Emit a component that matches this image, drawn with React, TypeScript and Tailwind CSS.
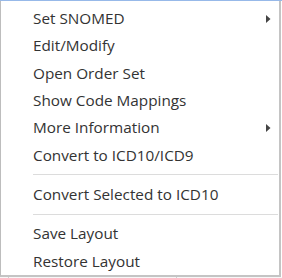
import React from 'react'

const Arrow = () => (
    <svg width="5" height="8" viewBox="0 0 5 8" className="absolute right-[8px] top-1/2 -translate-y-1/2">
        <path d="M0 0 L4.5 4 L0 8 Z" fill="#444444" />
    </svg>
)

const Item = ({ label, sub }: { label: string; sub?: boolean }) => (
    <div className="relative h-[27.3px] flex items-center pl-[32px] text-[15.3px] text-[#333333] whitespace-nowrap">
        {label}
        {sub && <Arrow />}
    </div>
)

const Separator = () => (
    <div className="h-[12px] flex items-center pl-[32px] pr-[1px]">
        <div className="h-px w-full bg-[#dcdcdc]"></div>
    </div>
)

export default function App() {
    return (
        <div className="w-[282px] h-[278px] bg-white overflow-hidden" style={{ fontFamily: '"Segoe UI", "Open Sans", sans-serif' }}>
            <div className="h-px bg-[#97b9e9]"></div>
            <div className="w-[281px] h-[276px] bg-white border-l border-r-2 border-b-2 border-l-[#bdbdbd] border-r-[#c4c4c4] border-b-[#c4c4c4] pt-[4px]">
                <Item label="Set SNOMED" sub />
                <Item label="Edit/Modify" />
                <Item label="Open Order Set" />
                <Item label="Show Code Mappings" />
                <Item label="More Information" sub />
                <Item label="Convert to ICD10/ICD9" />
                <Separator />
                <Item label="Convert Selected to ICD10" />
                <Separator />
                <Item label="Save Layout" />
                <Item label="Restore Layout" />
            </div>
            <div className="flex h-px bg-[#f7f7f7]">
                <div className="w-[8px]"></div>
                <div className="w-px bg-[#d0d0d0]"></div>
                <div className="w-[167px]"></div>
                <div className="w-px bg-[#d0d0d0]"></div>
            </div>
        </div>
    )
}
